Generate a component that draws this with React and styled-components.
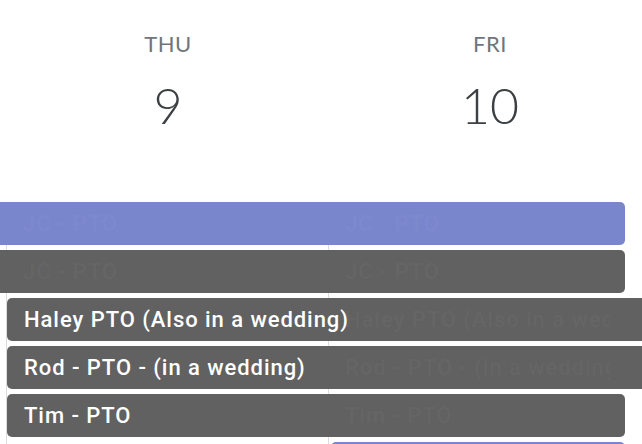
import React from "react";
import styled, { createGlobalStyle } from "styled-components";

const COLS = [6, 322, 322, 322];
const ROW_H = 43;
const ROW_GAP = 5;

const Global = createGlobalStyle`
  html, body { margin: 0; padding: 0; background: #fff; }
  body { overflow: hidden; }
  #root { width: 642px; height: 444px; overflow: hidden; }
`;

const Page = styled.div`
  width: 642px;
  height: 444px;
  overflow: hidden;
  display: flex;
  flex-direction: column;
  background: #fff;
`;

const HeaderRow = styled.div`
  display: grid;
  grid-template-columns: ${COLS.map((c) => `${c}px`).join(" ")};
  padding-top: 31px;
  padding-bottom: 67px;
  flex: 0 0 auto;
`;

const DayHead = styled.div`
  grid-column: ${(p) => p.$col + 1};
  display: flex;
  flex-direction: column;
  align-items: center;
  gap: 18px;
  padding-left: 2px;
  font-family: Lato, "Open Sans", sans-serif;
`;

const DayName = styled.div`
  font-size: 22px;
  line-height: 26px;
  color: #70757a;
  letter-spacing: 0.5px;
`;

const DayNum = styled.div`
  font-size: 50px;
  line-height: 60px;
  font-weight: 300;
  color: #3c4043;
`;

const Body = styled.div`
  display: grid;
  grid-template-columns: ${COLS.map((c) => `${c}px`).join(" ")};
  grid-template-rows: repeat(${(p) => p.$rows}, ${ROW_H}px);
  row-gap: ${ROW_GAP}px;
  flex: 0 0 auto;
`;

const ColLine = styled.div`
  grid-column: ${(p) => p.$col + 1};
  grid-row: 1 / -1;
  border-left: ${(p) => (p.$col === 0 ? "none" : "1px solid #dadce0")};
`;

const Bar = styled.div`
  grid-column: ${(p) => p.$start + 1} / ${(p) => p.$end + 2};
  grid-row: ${(p) => p.$row + 1};
  z-index: 1;
  display: flex;
  background: ${(p) => (p.$tone === "blue" ? "#7986cb" : "#616161")};
  margin-left: ${(p) => (p.$startsHere ? `${1 + (p.$shift || 0)}px` : "0")};
  margin-right: ${(p) => (p.$endsHere ? "25px" : "0")};
  border-top-left-radius: ${(p) => (p.$startsHere ? "5px" : "0")};
  border-bottom-left-radius: ${(p) => (p.$startsHere ? "5px" : "0")};
  border-top-right-radius: ${(p) => (p.$endsHere ? "5px" : "0")};
  border-bottom-right-radius: ${(p) => (p.$endsHere ? "5px" : "0")};
  overflow: hidden;
`;

const Segment = styled.div`
  flex: ${(p) => (p.$fill ? "1 1 0" : `0 0 ${p.$w}px`)};
  min-width: 0;
  box-sizing: border-box;
  padding: ${(p) => (p.$stub ? "0" : "0 40px 0 17px")};
  display: flex;
  align-items: center;
  overflow: ${(p) => (p.$main ? "visible" : "hidden")};
`;

const Label = styled.span`
  font-family: Roboto, "Liberation Sans", sans-serif;
  font-weight: 500;
  font-size: 22px;
  letter-spacing: 0.95px;
  white-space: nowrap;
  overflow: ${(p) => (p.$main ? "visible" : "hidden")};
  color: ${(p) => (p.$main ? "#ffffff" : "rgba(255,255,255,0.045)")};
`;

const events = [
  { label: "JC - PTO", tone: "blue", start: 0, end: 2, startsHere: false, endsHere: true },
  { label: "JC - PTO", tone: "gray", start: 0, end: 2, startsHere: false, endsHere: true },
  { label: "Haley PTO (Also in a wedding)", tone: "gray", start: 1, end: 3, startsHere: true, endsHere: false },
  { label: "Rod - PTO - (in a wedding)", tone: "gray", start: 1, end: 3, startsHere: true, endsHere: false },
  { label: "Tim - PTO", tone: "gray", start: 1, end: 2, startsHere: true, endsHere: true },
  { label: "", tone: "blue", start: 2, end: 2, startsHere: true, endsHere: true, shift: 2 },
];

function EventBar({ ev, row }) {
  const segs = [];
  for (let c = ev.start; c <= ev.end; c++) {
    const first = c === ev.start;
    const last = c === ev.end;
    let w = COLS[c];
    if (first && ev.startsHere) w -= 1 + (ev.shift || 0);
    const fill = last && ev.endsHere;
    const main = first && ev.startsHere;
    const stub = c === 0;
    segs.push(
      <Segment key={c} $w={w} $fill={fill} $main={main} $stub={stub}>
        {!stub && ev.label ? <Label $main={main}>{ev.label}</Label> : null}
      </Segment>
    );
  }
  return (
    <Bar
      $start={ev.start}
      $end={ev.end}
      $row={row}
      $tone={ev.tone}
      $startsHere={ev.startsHere}
      $endsHere={ev.endsHere}
      $shift={ev.shift}
    >
      {segs}
    </Bar>
  );
}

export default function App() {
  return (
    <Page>
      <Global />
      <HeaderRow>
        <DayHead $col={1}>
          <DayName>THU</DayName>
          <DayNum>9</DayNum>
        </DayHead>
        <DayHead $col={2}>
          <DayName>FRI</DayName>
          <DayNum>10</DayNum>
        </DayHead>
      </HeaderRow>
      <Body $rows={events.length}>
        {COLS.map((_, i) => (
          <ColLine key={i} $col={i} />
        ))}
        {events.map((ev, i) => (
          <EventBar key={i} ev={ev} row={i} />
        ))}
      </Body>
    </Page>
  );
}
